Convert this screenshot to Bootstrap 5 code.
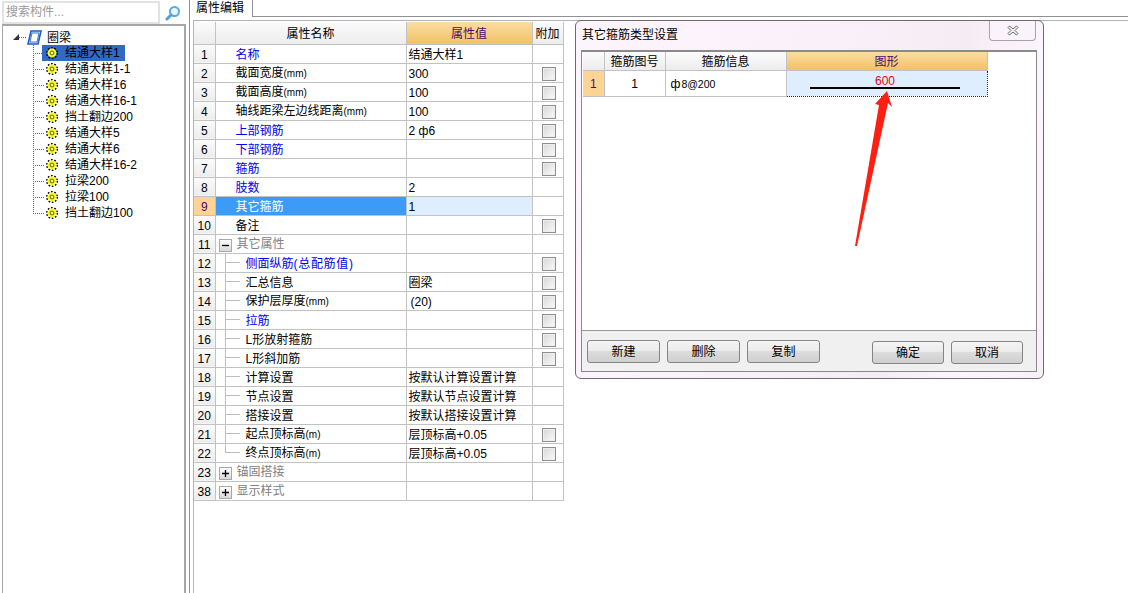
<!DOCTYPE html>
<html lang="zh"><head><meta charset="utf-8"><title>属性编辑</title>
<link href="https://cdn.jsdelivr.net/npm/bootstrap@5.3.0/dist/css/bootstrap.min.css" rel="stylesheet">
<style>
html,body{height:593px;overflow:hidden;background:#fff;}
body{font:12px/16px "Liberation Sans","Noto Sans CJK SC",sans-serif;color:#000;position:relative;}
.side{width:186px;height:593px;padding:1px 0 0 2px;flex:none;}
.srch{height:23px;padding-right:5px;}
.srch-box{width:158px;height:23px;border:2px solid #e2e2e2;color:#9a9a9a;font-size:12px;line-height:19px;padding-left:2px;}
.tree-box{height:569px;border:solid #a6a6a6;border-width:2px 2px 0 1px;padding-top:3px;}
.root-row{height:16px;}
.tw{width:0;height:0;border-style:solid;border-width:0 0 6px 6px;border-color:transparent transparent #333 transparent;margin:0 0 0 10px;}
.dots-h{width:8px;height:1px;background:repeating-linear-gradient(to right,#666 0 1px,transparent 1px 2px);}
.root-name{margin:2px 0 0 5px;}
.tree-list{list-style:none;margin:0 0 0 30px;padding:0;}
.tree-list li{height:16px;background:repeating-linear-gradient(to bottom,#666 0 1px,transparent 1px 2px) 0 0/1px 100% no-repeat,repeating-linear-gradient(to right,#666 0 1px,transparent 1px 2px) 0 50%/12px 1px no-repeat;}
.tree-list li:last-child{background:repeating-linear-gradient(to bottom,#666 0 1px,transparent 1px 2px) 0 0/1px 50% no-repeat,repeating-linear-gradient(to right,#666 0 1px,transparent 1px 2px) 0 50%/12px 1px no-repeat;}
.node{margin-left:9px;padding:0 5px 0 4px;gap:7px;height:16px;}
.node.on{background:#316ac5;}
.main{margin-left:3px;flex:1;border-left:1px solid #8f8f96;min-width:0;height:593px;}
.tabbar{height:17px;}
.tabx{width:63px;height:17px;border-right:1px solid #8f8f96;padding-left:6px;font-size:12px;line-height:16px;background:#fff;}
.tabfill{flex:1;border-bottom:1px solid #8f8f96;}
.frame{margin:3px 0 0 3px;border-top:1px solid #b4b4b4;border-left:1px solid #b4b4b4;height:573px;padding-top:1px;}
.gt{border-collapse:collapse;table-layout:fixed;margin:0;width:auto;color:#000;}
.gt td,.gt th{border:1px solid #c2c2c2;padding:2px 0 0;height:19px;font-weight:400;font-size:12px;line-height:14px;white-space:nowrap;overflow:hidden;vertical-align:middle;background:#fff;box-shadow:none;color:inherit;}
.pg .c1{width:21px}.pg .c2{width:191px}.pg .c3{width:126px}.pg .c4{width:31px}
.gt tr td:first-child,.gt tr th:first-child{border-left:0;}
.gt thead tr th{border-top:0;}
.pg thead th{height:22px;}
.gt th.hd,.gt td.no{background:linear-gradient(#fbfbfb,#ececec);text-align:center;}
.gt th.hd-on{background:linear-gradient(#fbdca2,#f1c264);color:#4a0a70;text-align:center;}
.gt td.no-on{background:#fdd494;color:#4a0a70;text-align:center;}
.gt td.nm{padding-left:20px;}
.gt td.nm.blu,.blu{color:#0000f0;}
.gt td.nm.sel{background:#3d9bf8;color:#fff;}
.gt td.vl{padding-left:2px;}
.gt td.vl.sel{background:#deeeff;}
.gt td.vl.ind{padding-left:4px;}
.gt td.sub{padding-left:30px;background:linear-gradient(#bdbdbd,#bdbdbd) 9px 0/1px 100% no-repeat,linear-gradient(#bdbdbd,#bdbdbd) 9px 50%/15px 1px no-repeat,#fff;}
.gt td.sub.end{background:linear-gradient(#bdbdbd,#bdbdbd) 9px 0/1px 50% no-repeat,linear-gradient(#bdbdbd,#bdbdbd) 9px 50%/15px 1px no-repeat,#fff;}
.gt td.grp{padding-left:3px;color:#808080;}
.unit{font-size:10px;}
.wide-par{letter-spacing:.7px;}
.xp{width:13px;height:13px;border:1px solid #a8a8a8;background:linear-gradient(#fff,#d8d8d8);color:#000;font-size:0;margin-right:5px;}
.xp svg{display:block;margin:1px;}
.cb{display:block;width:14px;height:14px;margin:0 0 0 9px;border:1px solid #8e8e8e;background:linear-gradient(135deg,#d6d6d6,#fbfbfb);box-shadow:inset 0 0 0 1px #eee;}
.dlg{position:absolute;left:575px;top:20px;width:469px;height:359px;border:1px solid #6f6a72;border-radius:6px;background:linear-gradient(105deg,#fdf5fd 0,#faf0fa 45%,#f5ecf3 70%,#fdf5fd 85%,#f9eff9 100%);padding:0 6px 6px 5px;z-index:2;}
.dlg-head{height:29px;}
.dlg-title{padding:7px 0 0 1px;font-size:12px;line-height:14px;}
.x-btn{width:47px;height:20px;border:1px solid #a9a4ab;border-top:0;border-radius:0 0 4px 4px;margin-right:1px;background:#fbf3fb;}
.dframe{height:322px;border:1px solid #8a8a8a;border-top:2px solid #8a8a8a;background:#f0f0f0;}
.dgrid{height:279px;background:#fff;padding:0 0 0 1px;border-bottom:1px solid #9a9a9a;}
.dg .d1{width:21px}.dg .d2{width:61px}.dg .d3{width:121px}.dg .d4{width:201px}
.dg thead th{height:18px;}
.dg tbody td{height:26px;}
.gt td.ctr{text-align:center;}
.gt td.lft{padding-left:5px;}
.small-val{font-size:10.5px;margin-left:1px;}
.gt td.shape{background:#deeeff;border:1px dotted #222;text-align:center;padding:0 3px 3px 0;}
.s600{display:block;color:#f00010;line-height:12px;}
.sline{display:block;width:150px;height:2px;background:#000;margin:0 auto;}
.dfoot{padding:9px 13px 0 5px;}
.btn-row{gap:7px;}
.wbtn{width:73px;height:23px;padding:0;font-size:12px;line-height:20px;color:#000;border:1px solid #858585;border-radius:3px;background:linear-gradient(#f4f4f4 0,#ececec 45%,#dcdcdc 50%,#cfcfcf 100%);}
.wbtn:hover{color:#000;border-color:#858585;}
.rg{margin-top:1px;}
.rg .wbtn{width:72px;}
.arrow{position:absolute;left:0;top:0;width:1128px;height:593px;z-index:3;pointer-events:none;}
</style></head>
<body>
<div class="d-flex">
  <aside class="side">
    <div class="srch d-flex align-items-center justify-content-between">
      <div class="srch-box">搜索构件...</div>
      <svg width="16" height="16" viewBox="0 0 16 16"><circle cx="9.500" cy="6.500" r="4.500" fill="#e8f5fd" stroke="#5aa9e0" stroke-width="2"/><path d="M6 10 2 14" stroke="#4f9fdb" stroke-width="3" stroke-linecap="round"/></svg>
    </div>
    <div class="tree-box">
      <div class="root-row d-flex align-items-center">
        <span class="tw"></span><span class="dots-h"></span>
        <svg width="15" height="15" viewBox="0 0 15 15"><path d="M4 1h10l-3 13H1z" fill="#dbe9fb" stroke="#1f5fc0" stroke-width="1.600"/><path d="M5 3h7l-2 9H3z" fill="#fff" stroke="#3b7bd6"/></svg>
        <span class="root-name">圈梁</span>
      </div>
      <ul class="tree-list" id="tree"></ul>
    </div>
  </aside>
  <main class="main">
    <div class="tabbar d-flex"><div class="tabx">属性编辑</div><div class="tabfill"></div></div>
    <div class="frame">
      <table class="table gt pg">
        <colgroup><col class="c1"><col class="c2"><col class="c3"><col class="c4"></colgroup>
        <thead><tr><th class="hd"></th><th class="hd">属性名称</th><th class="hd-on">属性值</th><th class="hd">附加</th></tr></thead>
        <tbody id="rows"></tbody>
      </table>
    </div>
  </main>
</div>

<section class="dlg">
  <div class="dlg-head d-flex justify-content-between align-items-start">
    <div class="dlg-title">其它箍筋类型设置</div>
    <div class="x-btn d-flex align-items-center justify-content-center"><svg width="12" height="11" viewBox="0 0 12 11"><path d="M2.500 1l3.500 3 3.500-3 1.500 1.500-3 3 3 3-1.500 1.500-3.500-3-3.500 3-1.500-1.500 3-3-3-3z" fill="#f6f6f6" stroke="#666"/></svg></div>
  </div>
  <div class="dframe">
    <div class="dgrid">
      <table class="table gt dg">
        <colgroup><col class="d1"><col class="d2"><col class="d3"><col class="d4"></colgroup>
        <thead><tr><th class="hd"></th><th class="hd">箍筋图号</th><th class="hd">箍筋信息</th><th class="hd-on">图形</th></tr></thead>
        <tbody><tr><td class="no-on">1</td><td class="ctr">1</td><td class="lft">ф<span class="small-val">8@200</span></td><td class="shape"><span class="s600">600</span><span class="sline"></span></td></tr></tbody>
      </table>
    </div>
    <div class="dfoot d-flex justify-content-between align-items-start">
      <div class="d-flex btn-row"><button class="btn wbtn">新建</button><button class="btn wbtn">删除</button><button class="btn wbtn">复制</button></div>
      <div class="d-flex btn-row rg"><button class="btn wbtn">确定</button><button class="btn wbtn">取消</button></div>
    </div>
  </div>
</section>

<svg class="arrow" viewBox="0 0 1128 593"><polygon points="887,91 892,107 888,103 857,246 855,246 879,105 875,104" fill="#fd1f12"/></svg>

<script>
const gear='<svg width="12" height="12" viewBox="0 0 12 12"><circle cx="6" cy="6" r="5.300" fill="none" stroke="#000" stroke-width="1.400" stroke-dasharray="1.700 1.630"/><circle cx="6" cy="6" r="4.400" fill="#ffff00"/><circle cx="6" cy="6" r="1.900" fill="#ffff80" stroke="#333" stroke-width=".8"/></svg>';
const names=['结通大样1','结通大样1-1','结通大样16','结通大样16-1','挡土翻边200','结通大样5','结通大样6','结通大样16-2','拉梁200','拉梁100','挡土翻边100'];
document.getElementById('tree').innerHTML=names.map((n,i)=>`<li><div class="node d-inline-flex align-items-center ${i==0?'on':''}">${gear}<span>${n}</span></div></li>`).join('');
const U=s=>`<span class="unit">${s}</span>`;
const R=[[1,'名称','结通大样1',0,'b'],[2,'截面宽度'+U('(mm)'),'300',1,''],[3,'截面高度'+U('(mm)'),'100',1,''],[4,'轴线距梁左边线距离'+U('(mm)'),'100',1,''],[5,'上部钢筋','2 ф6',1,'b'],[6,'下部钢筋','',1,'b'],[7,'箍筋','',1,'b'],[8,'肢数','2',0,'b'],[9,'其它箍筋','1',0,'s'],[10,'备注','',1,''],[11,'其它属性','',0,'g-'],[12,'侧面纵筋<span class="wide-par">(总配筋值)</span>','',1,'tb'],[13,'汇总信息','圈梁',1,'t'],[14,'保护层厚度'+U('(mm)'),'(20)',1,'ti'],[15,'拉筋','',1,'tb'],[16,'L形放射箍筋','',1,'t'],[17,'L形斜加筋','',1,'t'],[18,'计算设置','按默认计算设置计算',0,'t'],[19,'节点设置','按默认节点设置计算',0,'t'],[20,'搭接设置','按默认搭接设置计算',0,'t'],[21,'起点顶标高'+U('(m)'),'层顶标高+0.05',1,'t'],[22,'终点顶标高'+U('(m)'),'层顶标高+0.05',1,'te'],[23,'锚固搭接','',0,'g+'],[38,'显示样式','',0,'g+']];
const xp=s=>`<span class="xp d-inline-flex align-middle"><svg width="9" height="9" viewBox="0 0 9 9"><path d="M1 4.500h7${s=='+'?'M4.500 1v7':''}" stroke="#000" stroke-width="1.300"/></svg></span>`;
document.getElementById('rows').innerHTML=R.map(([n,t,v,c,k])=>{
 let nc='nm',lab=t;
 if(k=='b')nc+=' blu'; if(k=='s')nc+=' sel';
 if(k[0]=='t'){nc+=' sub'; if(k=='tb')nc+=' blu'; if(k=='te')nc+=' end';}
 if(k[0]=='g'){nc='grp';lab=xp(k[1])+t;}
 return `<tr><td class="${k=='s'?'no-on':'no'}">${n}</td><td class="${nc}">${lab}</td><td class="vl${k=='s'?' sel':''}${k=='ti'?' ind':''}">${v}</td><td>${c?'<span class="cb"></span>':''}</td></tr>`;
}).join('');
</script>
</body></html>
